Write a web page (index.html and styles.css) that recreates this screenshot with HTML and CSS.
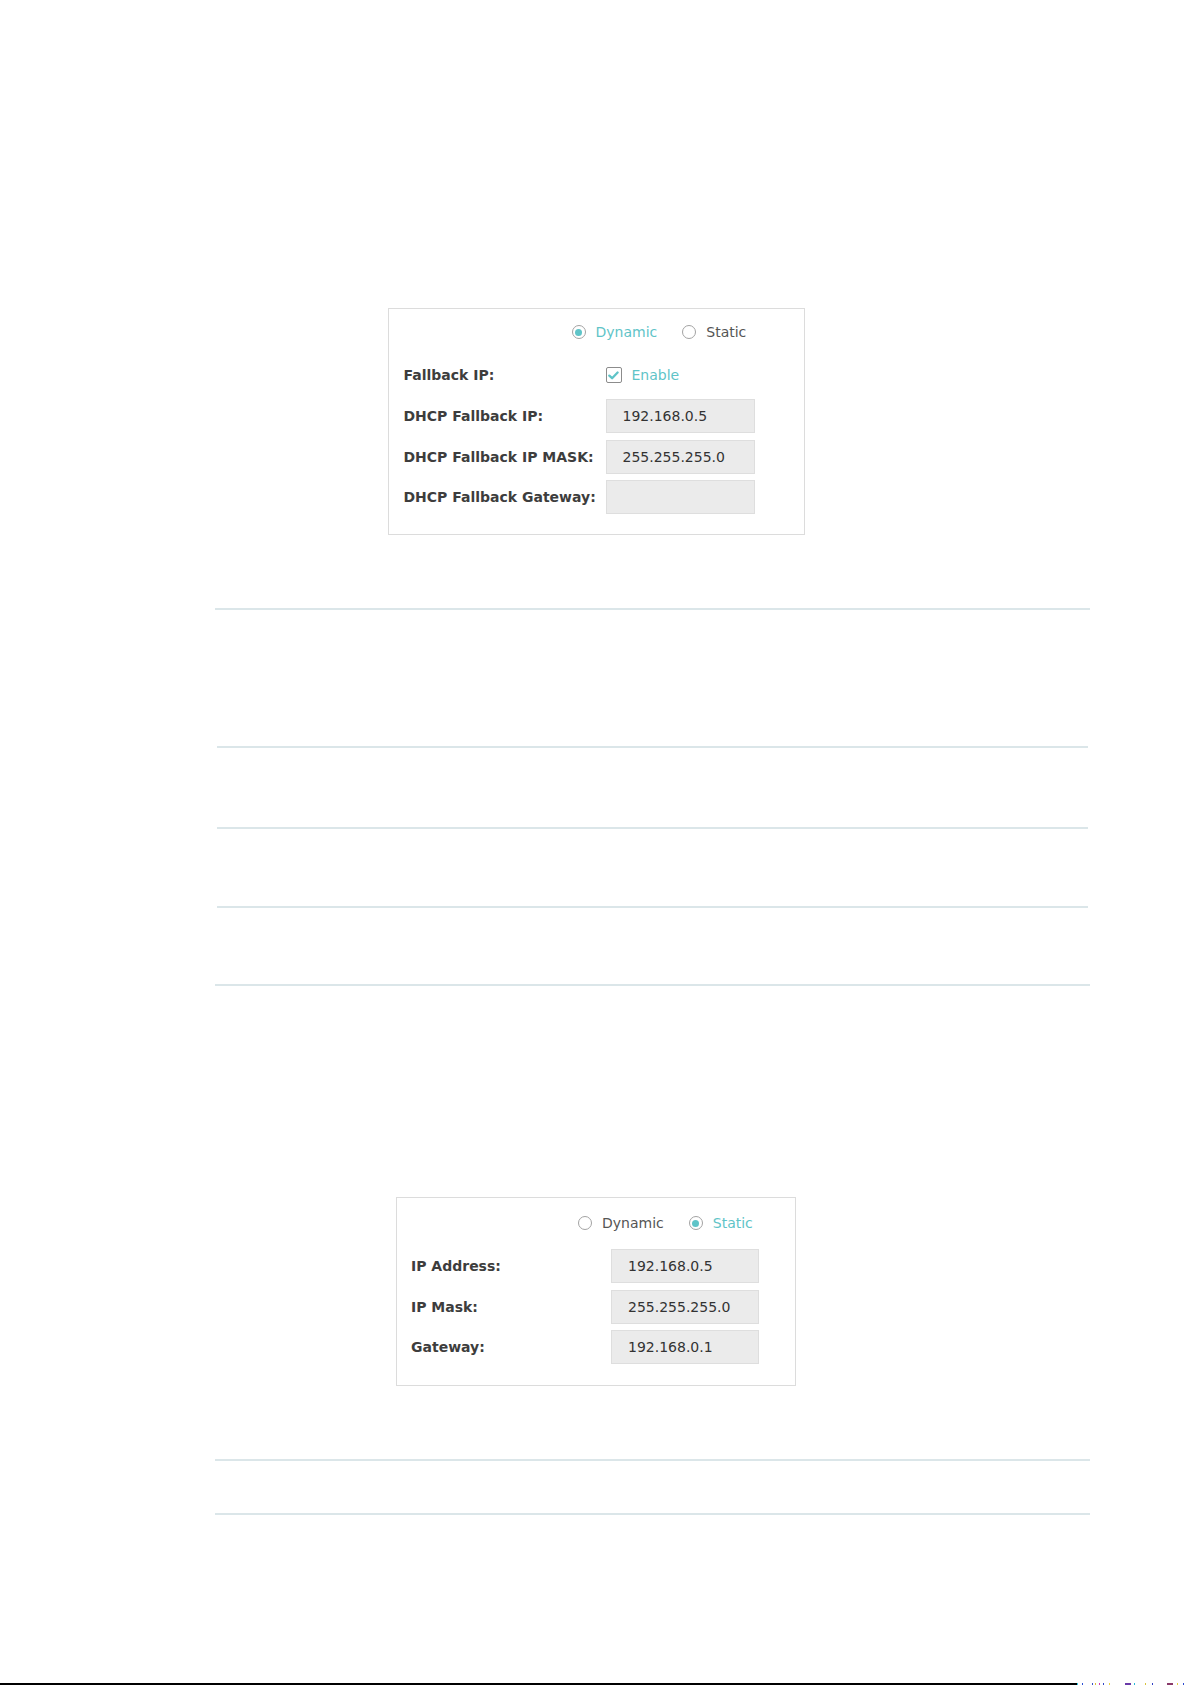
FILE: index.html
```html
<!DOCTYPE html>
<html>
<head>
<meta charset="utf-8">
<link rel="stylesheet" href="styles.css">
</head>
<body>
<div class="page">
  <div class="panel panel-dhcp">
    <div class="radio-row">
      <span class="radio checked"><span class="dot"></span><span class="rtext">Dynamic</span></span>
      <span class="radio"><span class="dot"></span><span class="rtext">Static</span></span>
    </div>
    <div class="form-row check-row">
      <span class="flabel">Fallback IP:</span>
      <span class="check"><svg width="11" height="9" viewBox="0 0 11 9"><path d="M1.3 4.6 L4.1 7.2 L9.6 1.5" fill="none" stroke="#5fc4c8" stroke-width="2.3" stroke-linecap="round" stroke-linejoin="round"/></svg></span>
      <span class="ctext">Enable</span>
    </div>
    <div class="form-row field-row first"><span class="flabel">DHCP Fallback IP:</span><span class="field">192.168.0.5</span></div>
    <div class="form-row field-row"><span class="flabel">DHCP Fallback IP MASK:</span><span class="field">255.255.255.0</span></div>
    <div class="form-row field-row"><span class="flabel">DHCP Fallback Gateway:</span><span class="field"></span></div>
  </div>

  <div class="table t1">
    <div class="trow h136"></div>
    <div class="sep"></div>
    <div class="trow h79"></div>
    <div class="sep"></div>
    <div class="trow h77"></div>
    <div class="sep"></div>
    <div class="trow h76"></div>
  </div>

  <div class="panel panel-static">
    <div class="radio-row">
      <span class="radio"><span class="dot"></span><span class="rtext">Dynamic</span></span>
      <span class="radio checked"><span class="dot"></span><span class="rtext">Static</span></span>
    </div>
    <div class="form-row field-row first"><span class="flabel">IP Address:</span><span class="field">192.168.0.5</span></div>
    <div class="form-row field-row"><span class="flabel">IP Mask:</span><span class="field">255.255.255.0</span></div>
    <div class="form-row field-row"><span class="flabel">Gateway:</span><span class="field">192.168.0.1</span></div>
  </div>

  <div class="table t2">
    <div class="trow h52"></div>
  </div>

  <div class="footer-line">
    <span class="black"></span>
    <svg class="noise" width="115" height="2" viewBox="0 0 115 2">
      <rect x="0" y="0" width="1" height="2" fill="#29c6e0"/>
      <rect x="5" y="0" width="1" height="2" fill="#2b4fd6"/>
      <rect x="15" y="0" width="1" height="2" fill="#3350c8"/>
      <rect x="18" y="0" width="1" height="2" fill="#e0c43a"/>
      <rect x="22" y="0" width="1" height="2" fill="#d23ab8"/>
      <rect x="26" y="0" width="1" height="2" fill="#2e44c9"/>
      <rect x="32" y="0" width="1" height="2" fill="#e6d040"/>
      <rect x="48" y="0" width="6" height="2" fill="#6a3aa8"/>
      <rect x="57" y="0" width="1" height="2" fill="#28b8da"/>
      <rect x="68" y="0" width="1" height="2" fill="#d8c23a"/>
      <rect x="75" y="0" width="1" height="2" fill="#3040c6"/>
      <rect x="90" y="0" width="6" height="2" fill="#8a3a6a"/>
      <rect x="100" y="0" width="1" height="2" fill="#e4cf42"/>
      <rect x="106" y="0" width="1" height="2" fill="#2a48d0"/>
    </svg>
  </div>
</div>
</body>
</html>
```

FILE: styles.css
```css
* { box-sizing: border-box; }
html, body { margin: 0; padding: 0; background: #ffffff; }
body {
  font-family: "DejaVu Sans", Verdana, sans-serif;
  font-size: 14px;
  color: #3b3b3b;
}
.page {
  width: 1192px;
  height: 1685px;
  padding-top: 308px;
  overflow: hidden;
}

/* panels */
.panel {
  margin: 0 auto;
  border: 1px solid #dcdcdc;
  background: #fff;
}
.panel-dhcp {
  width: 417px;
  height: 227px;
  padding: 13px 0 0 15px;
}
.panel-static {
  width: 400px;
  height: 189px;
  margin-top: 211px;
  padding: 15px 0 0 14px;
}

.radio-row {
  display: flex;
  align-items: center;
  height: 20px;
}
.panel-dhcp .radio-row { padding-left: 168px; }
.panel-static .radio-row { padding-left: 167px; }

.radio {
  display: inline-flex;
  align-items: center;
  color: #555;
}
.radio + .radio { margin-left: 25px; }
.radio .dot {
  width: 14px;
  height: 14px;
  border: 1.5px solid #a3a3a3;
  border-radius: 50%;
  margin-right: 10px;
  display: inline-flex;
  align-items: center;
  justify-content: center;
}
.radio.checked .dot::after {
  content: "";
  width: 7px;
  height: 7px;
  border-radius: 50%;
  background: #5fc4c8;
}
.radio.checked .rtext { color: #5fc4c8; }

.form-row {
  display: flex;
  align-items: center;
}
.flabel {
  font-weight: bold;
  color: #3d3d3d;
  flex: none;
}
.panel-dhcp .flabel { width: 202px; }
.panel-static .flabel { width: 200px; }

.check-row {
  height: 20px;
  margin-top: 23px;
}
.check {
  width: 16px;
  height: 16px;
  border: 1.5px solid #8c8c8c;
  border-radius: 2px;
  display: inline-flex;
  align-items: center;
  justify-content: center;
}
.ctext {
  margin-left: 10px;
  color: #5fc4c8;
}

.field-row { height: 34px; margin-top: 6.5px; }
.panel-dhcp .field-row.first { margin-top: 14px; }
.panel-static .field-row.first { margin-top: 16px; }

.field {
  display: block;
  height: 34px;
  line-height: 32px;
  padding-left: 16px;
  background: #ebebeb;
  border: 1px solid #dedede;
  color: #333;
}
.panel-dhcp .field { width: 149px; }
.panel-static .field { width: 148px; }

/* tables */
.table {
  margin-left: 215px;
  width: 875px;
  border-top: 2px solid #dbe6e9;
  border-bottom: 2px solid #dbe6e9;
}
.t1 { margin-top: 73px; }
.t2 { margin-top: 73px; }
.sep {
  height: 2px;
  margin: 0 2px;
  background: #dbe6e9;
}
.h136 { height: 136px; }
.h79 { height: 79px; }
.h77 { height: 77px; }
.h76 { height: 76px; }
.h52 { height: 52px; }

.footer-line {
  margin-top: 168px;
  display: flex;
  height: 2px;
}
.footer-line .black {
  width: 1077px;
  height: 2px;
  background: #000;
}
.footer-line .noise { display: block; }
```
